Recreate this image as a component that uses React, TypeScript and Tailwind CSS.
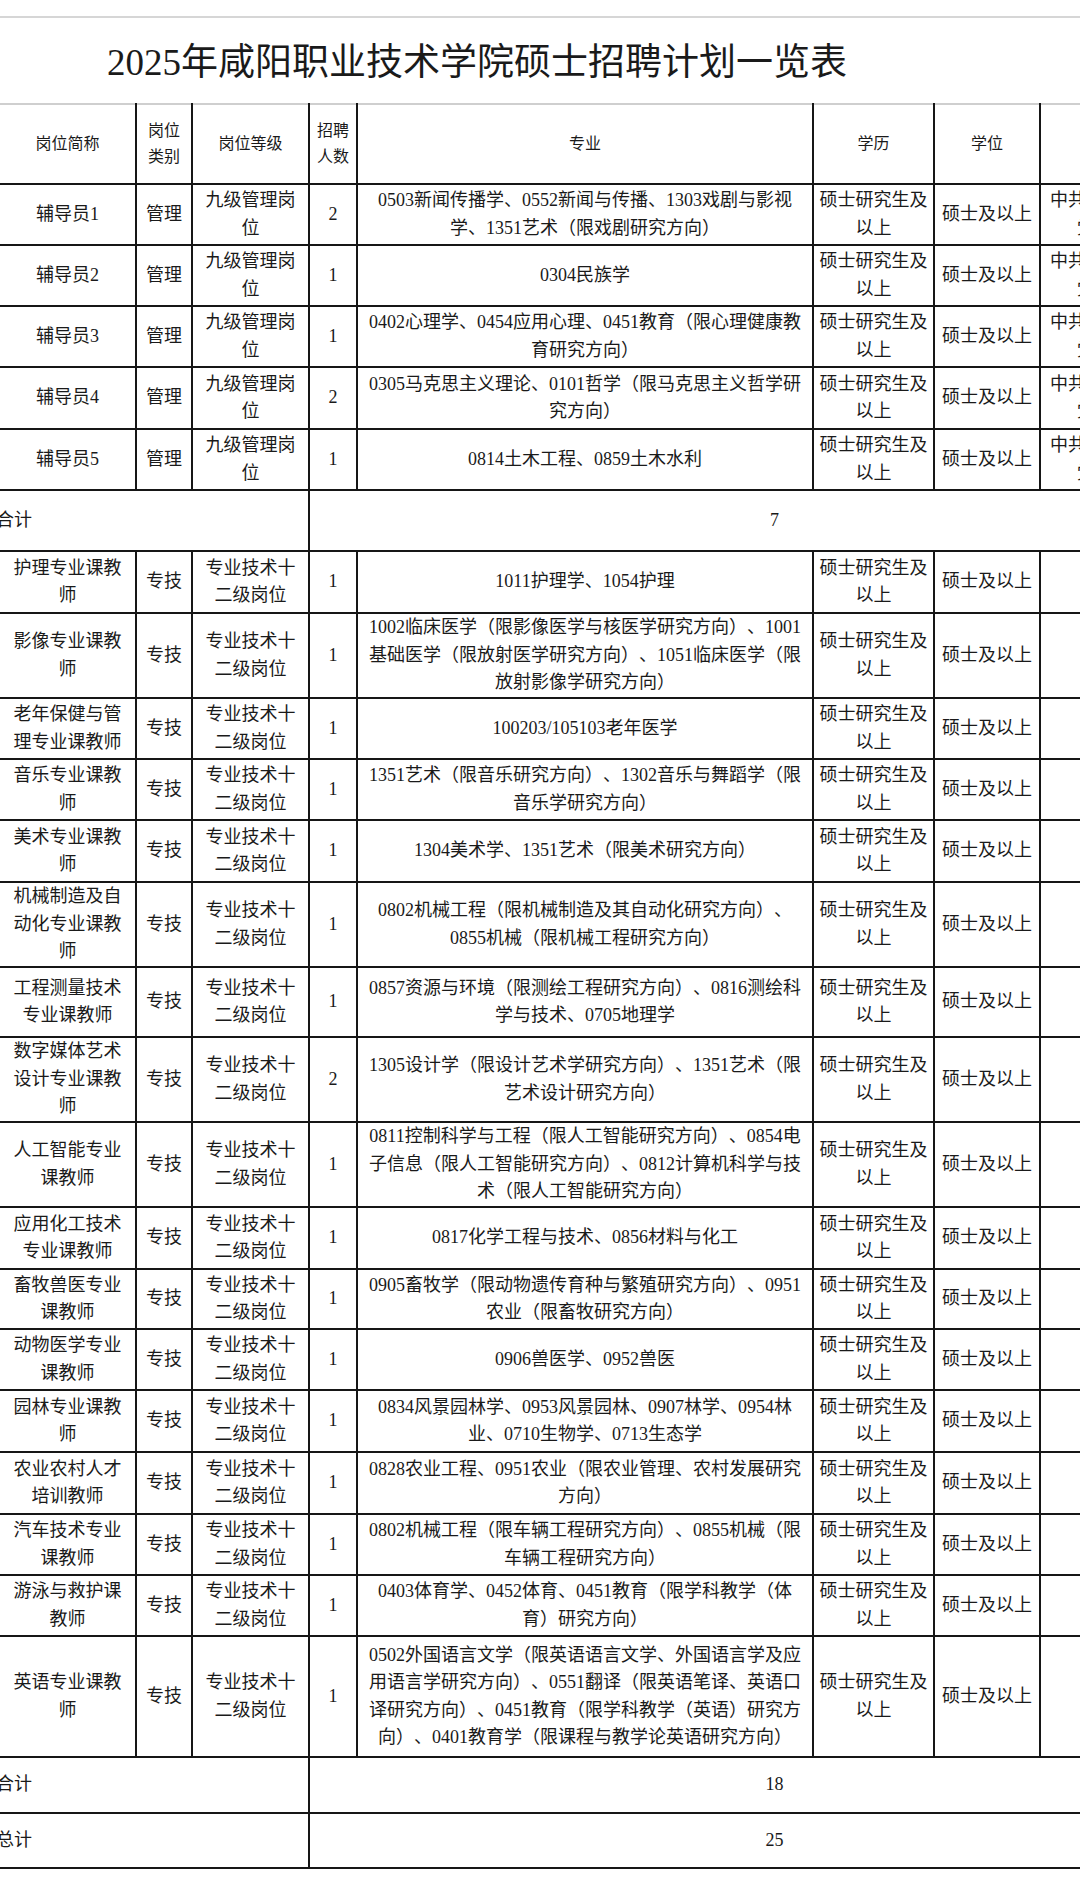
import React from 'react';

interface PlanRow {
  h: string;
  name: string[];
  kind: string;
  level: string[];
  count: string;
  major: string[];
  extra?: string[];
}

const GUAN_LI = ['九级管理岗', '位'];
const ZHUAN_JI = ['专业技术十', '二级岗位'];
const PARTY = ['中共党员（含中共预备', '党员），须具备'];

const adminRows: PlanRow[] = [
  { h: 'h-[61px]', name: ['辅导员1'], kind: '管理', level: GUAN_LI, count: '2', major: ['0503新闻传播学、0552新闻与传播、1303戏剧与影视', '学、1351艺术（限戏剧研究方向）'], extra: PARTY },
  { h: 'h-[61px]', name: ['辅导员2'], kind: '管理', level: GUAN_LI, count: '1', major: ['0304民族学'], extra: PARTY },
  { h: 'h-[61px]', name: ['辅导员3'], kind: '管理', level: GUAN_LI, count: '1', major: ['0402心理学、0454应用心理、0451教育（限心理健康教', '育研究方向）'], extra: PARTY },
  { h: 'h-[62px]', name: ['辅导员4'], kind: '管理', level: GUAN_LI, count: '2', major: ['0305马克思主义理论、0101哲学（限马克思主义哲学研', '究方向）'], extra: PARTY },
  { h: 'h-[61px]', name: ['辅导员5'], kind: '管理', level: GUAN_LI, count: '1', major: ['0814土木工程、0859土木水利'], extra: PARTY },
];

const techRows: PlanRow[] = [
  { h: 'h-[62px]', name: ['护理专业课教', '师'], kind: '专技', level: ZHUAN_JI, count: '1', major: ['1011护理学、1054护理'] },
  { h: 'h-[85px]', name: ['影像专业课教', '师'], kind: '专技', level: ZHUAN_JI, count: '1', major: ['1002临床医学（限影像医学与核医学研究方向）、1001', '基础医学（限放射医学研究方向）、1051临床医学（限', '放射影像学研究方向）'] },
  { h: 'h-[61px]', name: ['老年保健与管', '理专业课教师'], kind: '专技', level: ZHUAN_JI, count: '1', major: ['100203/105103老年医学'] },
  { h: 'h-[61px]', name: ['音乐专业课教', '师'], kind: '专技', level: ZHUAN_JI, count: '1', major: ['1351艺术（限音乐研究方向）、1302音乐与舞蹈学（限', '音乐学研究方向）'] },
  { h: 'h-[62px]', name: ['美术专业课教', '师'], kind: '专技', level: ZHUAN_JI, count: '1', major: ['1304美术学、1351艺术（限美术研究方向）'] },
  { h: 'h-[85px]', name: ['机械制造及自', '动化专业课教', '师'], kind: '专技', level: ZHUAN_JI, count: '1', major: ['0802机械工程（限机械制造及其自动化研究方向）、', '0855机械（限机械工程研究方向）'] },
  { h: 'h-[70px]', name: ['工程测量技术', '专业课教师'], kind: '专技', level: ZHUAN_JI, count: '1', major: ['0857资源与环境（限测绘工程研究方向）、0816测绘科', '学与技术、0705地理学'] },
  { h: 'h-[85px]', name: ['数字媒体艺术', '设计专业课教', '师'], kind: '专技', level: ZHUAN_JI, count: '2', major: ['1305设计学（限设计艺术学研究方向）、1351艺术（限', '艺术设计研究方向）'] },
  { h: 'h-[85px]', name: ['人工智能专业', '课教师'], kind: '专技', level: ZHUAN_JI, count: '1', major: ['0811控制科学与工程（限人工智能研究方向）、0854电', '子信息（限人工智能研究方向）、0812计算机科学与技', '术（限人工智能研究方向）'] },
  { h: 'h-[62px]', name: ['应用化工技术', '专业课教师'], kind: '专技', level: ZHUAN_JI, count: '1', major: ['0817化学工程与技术、0856材料与化工'] },
  { h: 'h-[60px]', name: ['畜牧兽医专业', '课教师'], kind: '专技', level: ZHUAN_JI, count: '1', major: ['0905畜牧学（限动物遗传育种与繁殖研究方向）、0951', '农业（限畜牧研究方向）'] },
  { h: 'h-[61px]', name: ['动物医学专业', '课教师'], kind: '专技', level: ZHUAN_JI, count: '1', major: ['0906兽医学、0952兽医'] },
  { h: 'h-[62px]', name: ['园林专业课教', '师'], kind: '专技', level: ZHUAN_JI, count: '1', major: ['0834风景园林学、0953风景园林、0907林学、0954林', '业、0710生物学、0713生态学'] },
  { h: 'h-[62px]', name: ['农业农村人才', '培训教师'], kind: '专技', level: ZHUAN_JI, count: '1', major: ['0828农业工程、0951农业（限农业管理、农村发展研究', '方向）'] },
  { h: 'h-[61px]', name: ['汽车技术专业', '课教师'], kind: '专技', level: ZHUAN_JI, count: '1', major: ['0802机械工程（限车辆工程研究方向）、0855机械（限', '车辆工程研究方向）'] },
  { h: 'h-[61px]', name: ['游泳与救护课', '教师'], kind: '专技', level: ZHUAN_JI, count: '1', major: ['0403体育学、0452体育、0451教育（限学科教学（体', '育）研究方向）'] },
  { h: 'h-[121px]', name: ['英语专业课教', '师'], kind: '专技', level: ZHUAN_JI, count: '1', major: ['0502外国语言文学（限英语语言文学、外国语言学及应', '用语言学研究方向）、0551翻译（限英语笔译、英语口', '译研究方向）、0451教育（限学科教学（英语）研究方', '向）、0401教育学（限课程与教学论英语研究方向）'] },
];

const cell = 'border-2 border-[#161616] p-0 text-center align-middle whitespace-nowrap overflow-hidden';

function Lines({ items }: { items: string[] }) {
  return (
    <>
      {items.map((t, i) => (
        <div key={i}>{t}</div>
      ))}
    </>
  );
}

function DataRow({ row }: { row: PlanRow }) {
  return (
    <tr className={row.h}>
      <td className={`${cell} border-l-0`}><Lines items={row.name} /></td>
      <td className={cell}>{row.kind}</td>
      <td className={cell}><Lines items={row.level} /></td>
      <td className={cell}>{row.count}</td>
      <td className={cell}><Lines items={row.major} /></td>
      <td className={cell}><Lines items={['硕士研究生及', '以上']} /></td>
      <td className={cell}>硕士及以上</td>
      <td className={cell}>{row.extra && <Lines items={row.extra} />}</td>
    </tr>
  );
}

function TotalRow({ h, label, value }: { h: string; label: string; value: string }) {
  return (
    <tr className={h}>
      <td colSpan={3} className={`${cell} border-l-0 text-left`}>
        <span className="inline-block -ml-[4px]">{label}</span>
      </td>
      <td colSpan={5} className={cell}>{value}</td>
    </tr>
  );
}

export default function App() {
  return (
    <div className="w-[1080px] h-[1884px] bg-white overflow-hidden text-[#1a1a1a] [text-spacing-trim:space-all] [font-family:'Liberation_Serif','Noto_Sans_CJK_SC',serif]">
      <div className="h-[16px]" />
      <div className="h-[2px] bg-[#d6d6d6]" />

      {/* Title */}
      <div className="h-[85px] pl-[107px] pt-[4px] flex items-center">
        <h1 className="text-[37px] leading-none font-normal whitespace-nowrap">
          2025年咸阳职业技术学院硕士招聘计划一览表
        </h1>
      </div>

      <table className="border-collapse table-fixed w-[1240px] text-[18px] leading-[27.5px]">
        <colgroup>
          <col className="w-[136px]" />
          <col className="w-[56px]" />
          <col className="w-[117px]" />
          <col className="w-[48px]" />
          <col className="w-[456px]" />
          <col className="w-[121px]" />
          <col className="w-[106px]" />
          <col className="w-[200px]" />
        </colgroup>
        <thead>
          <tr className="h-[80px] text-[16px] leading-[26px]">
            <th className={`${cell} border-l-0 border-t-[#cfcfcf] font-normal`}>岗位简称</th>
            <th className={`${cell} border-t-[#cfcfcf] font-normal`}><Lines items={['岗位', '类别']} /></th>
            <th className={`${cell} border-t-[#cfcfcf] font-normal`}>岗位等级</th>
            <th className={`${cell} border-t-[#cfcfcf] font-normal`}><Lines items={['招聘', '人数']} /></th>
            <th className={`${cell} border-t-[#cfcfcf] font-normal`}>专业</th>
            <th className={`${cell} border-t-[#cfcfcf] font-normal`}>学历</th>
            <th className={`${cell} border-t-[#cfcfcf] font-normal`}>学位</th>
            <th className={`${cell} border-t-[#cfcfcf] font-normal`}>其他条件</th>
          </tr>
        </thead>
        <tbody>
          {adminRows.map((r) => (
            <DataRow key={r.name.join('')} row={r} />
          ))}
          <TotalRow h="h-[61px]" label="合计" value="7" />
          {techRows.map((r) => (
            <DataRow key={r.name.join('')} row={r} />
          ))}
          <TotalRow h="h-[56px]" label="合计" value="18" />
          <TotalRow h="h-[55px]" label="总计" value="25" />
        </tbody>
      </table>
    </div>
  );
}
